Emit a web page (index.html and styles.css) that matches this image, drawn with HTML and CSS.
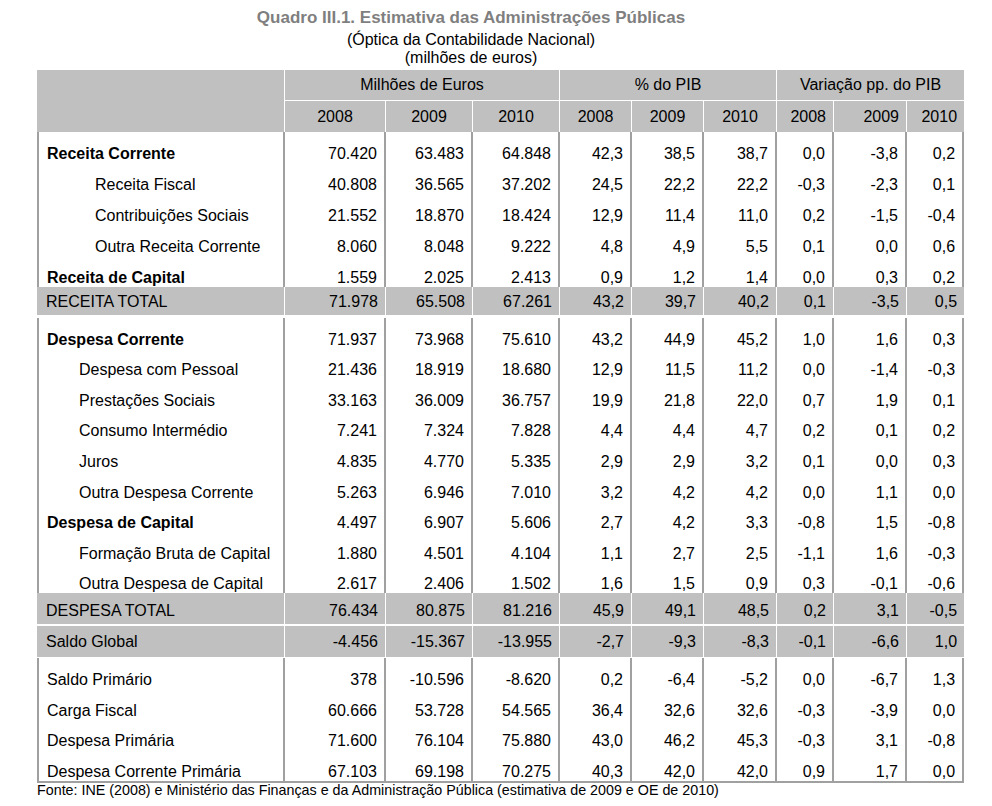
FILE: index.html
```html
<!DOCTYPE html>
<html lang="pt">
<head>
<meta charset="utf-8">
<title>Quadro III.1</title>
<link rel="stylesheet" href="styles.css">
</head>
<body>
<div class="heading">
  <div class="title">Quadro III.1. Estimativa das Administrações Públicas</div>
  <div class="sub first">(Óptica da Contabilidade Nacional)</div>
  <div class="sub">(milhões de euros)</div>
</div>
<table class="quadro">
  <colgroup>
    <col class="c-lbl"><col class="c-me1"><col class="c-me"><col class="c-me"><col class="c-pib"><col class="c-pib"><col class="c-pib3"><col class="c-var"><col class="c-var2"><col class="c-var">
  </colgroup>
  <thead>
    <tr class="hr1">
      <th class="blank" rowspan="2"></th>
      <th class="grp" colspan="3">Milhões de Euros</th>
      <th class="grp" colspan="3">% do PIB</th>
      <th class="grp end" colspan="3">Variação pp. do PIB</th>
    </tr>
    <tr class="hr2">
      <th>2008</th><th>2009</th><th>2010</th>
      <th>2008</th><th>2009</th><th>2010</th>
      <th class="rt">2008</th><th class="rt">2009</th><th class="rt end">2010</th>
    </tr>
  </thead>
  <tbody>
    <tr class="r rc"><td class="lbl b">Receita Corrente</td><td>70.420</td><td>63.483</td><td>64.848</td><td>42,3</td><td>38,5</td><td>38,7</td><td>0,0</td><td>-3,8</td><td>0,2</td></tr>
    <tr class="r rc"><td class="lbl i1">Receita Fiscal</td><td>40.808</td><td>36.565</td><td>37.202</td><td>24,5</td><td>22,2</td><td>22,2</td><td>-0,3</td><td>-2,3</td><td>0,1</td></tr>
    <tr class="r rc"><td class="lbl i1">Contribuições Sociais</td><td>21.552</td><td>18.870</td><td>18.424</td><td>12,9</td><td>11,4</td><td>11,0</td><td>0,2</td><td>-1,5</td><td>-0,4</td></tr>
    <tr class="r rc"><td class="lbl i1">Outra Receita Corrente</td><td>8.060</td><td>8.048</td><td>9.222</td><td>4,8</td><td>4,9</td><td>5,5</td><td>0,1</td><td>0,0</td><td>0,6</td></tr>
    <tr class="r rc"><td class="lbl b">Receita de Capital</td><td>1.559</td><td>2.025</td><td>2.413</td><td>0,9</td><td>1,2</td><td>1,4</td><td>0,0</td><td>0,3</td><td>0,2</td></tr>
    <tr class="tot tot-r"><td class="lbl">RECEITA TOTAL</td><td>71.978</td><td>65.508</td><td>67.261</td><td>43,2</td><td>39,7</td><td>40,2</td><td>0,1</td><td>-3,5</td><td class="end">0,5</td></tr>
    <tr class="r"><td class="lbl b">Despesa Corrente</td><td>71.937</td><td>73.968</td><td>75.610</td><td>43,2</td><td>44,9</td><td>45,2</td><td>1,0</td><td>1,6</td><td>0,3</td></tr>
    <tr class="r"><td class="lbl i2">Despesa com Pessoal</td><td>21.436</td><td>18.919</td><td>18.680</td><td>12,9</td><td>11,5</td><td>11,2</td><td>0,0</td><td>-1,4</td><td>-0,3</td></tr>
    <tr class="r"><td class="lbl i2">Prestações Sociais</td><td>33.163</td><td>36.009</td><td>36.757</td><td>19,9</td><td>21,8</td><td>22,0</td><td>0,7</td><td>1,9</td><td>0,1</td></tr>
    <tr class="r"><td class="lbl i2">Consumo Intermédio</td><td>7.241</td><td>7.324</td><td>7.828</td><td>4,4</td><td>4,4</td><td>4,7</td><td>0,2</td><td>0,1</td><td>0,2</td></tr>
    <tr class="r"><td class="lbl i2">Juros</td><td>4.835</td><td>4.770</td><td>5.335</td><td>2,9</td><td>2,9</td><td>3,2</td><td>0,1</td><td>0,0</td><td>0,3</td></tr>
    <tr class="r"><td class="lbl i2">Outra Despesa Corrente</td><td>5.263</td><td>6.946</td><td>7.010</td><td>3,2</td><td>4,2</td><td>4,2</td><td>0,0</td><td>1,1</td><td>0,0</td></tr>
    <tr class="r"><td class="lbl b">Despesa de Capital</td><td>4.497</td><td>6.907</td><td>5.606</td><td>2,7</td><td>4,2</td><td>3,3</td><td>-0,8</td><td>1,5</td><td>-0,8</td></tr>
    <tr class="r"><td class="lbl i2">Formação Bruta de Capital</td><td>1.880</td><td>4.501</td><td>4.104</td><td>1,1</td><td>2,7</td><td>2,5</td><td>-1,1</td><td>1,6</td><td>-0,3</td></tr>
    <tr class="r"><td class="lbl i2">Outra Despesa de Capital</td><td>2.617</td><td>2.406</td><td>1.502</td><td>1,6</td><td>1,5</td><td>0,9</td><td>0,3</td><td>-0,1</td><td>-0,6</td></tr>
    <tr class="tot tot-d"><td class="lbl">DESPESA TOTAL</td><td>76.434</td><td>80.875</td><td>81.216</td><td>45,9</td><td>49,1</td><td>48,5</td><td>0,2</td><td>3,1</td><td class="end">-0,5</td></tr>
    <tr class="tot tot-s"><td class="lbl">Saldo Global</td><td>-4.456</td><td>-15.367</td><td>-13.955</td><td>-2,7</td><td>-9,3</td><td>-8,3</td><td>-0,1</td><td>-6,6</td><td class="end">1,0</td></tr>
    <tr class="r"><td class="lbl">Saldo Primário</td><td>378</td><td>-10.596</td><td>-8.620</td><td>0,2</td><td>-6,4</td><td>-5,2</td><td>0,0</td><td>-6,7</td><td>1,3</td></tr>
    <tr class="r"><td class="lbl">Carga Fiscal</td><td>60.666</td><td>53.728</td><td>54.565</td><td>36,4</td><td>32,6</td><td>32,6</td><td>-0,3</td><td>-3,9</td><td>0,0</td></tr>
    <tr class="r"><td class="lbl">Despesa Primária</td><td>71.600</td><td>76.104</td><td>75.880</td><td>43,0</td><td>46,2</td><td>45,3</td><td>-0,3</td><td>3,1</td><td>-0,8</td></tr>
    <tr class="r last"><td class="lbl">Despesa Corrente Primária</td><td>67.103</td><td>69.198</td><td>70.275</td><td>40,3</td><td>42,0</td><td>42,0</td><td>0,9</td><td>1,7</td><td>0,0</td></tr>
  </tbody>
</table>
<p class="fonte">Fonte: INE (2008) e Ministério das Finanças e da Administração Pública (estimativa de 2009 e OE de 2010)</p>
</body>
</html>
```

FILE: styles.css
```css
html, body {
  margin: 0;
  padding: 0;
  background: #fff;
}
body {
  padding: 8px;
  font-family: "Liberation Sans", Arial, sans-serif;
  color: #000;
}

.heading {
  width: 926px;
  text-align: center;
}
.title {
  font-size: 17px;
  line-height: 19px;
  font-weight: bold;
  color: #7f7f7f;
}
.sub {
  font-size: 16px;
  line-height: 18px;
}
.sub.first {
  margin-top: 4px;
}

.quadro {
  border-collapse: separate;
  border-spacing: 0;
  table-layout: fixed;
  width: 927px;
  margin: 3px 0 0 29px;
  font-size: 16px;
  line-height: 18px;
  color: #000;
}
.c-lbl { width: 248px; }
.c-me1 { width: 101px; }
.c-me { width: 87px; }
.c-pib { width: 72px; }
.c-pib3 { width: 73px; }
.c-var { width: 57px; }
.c-var2 { width: 73px; }

.quadro th,
.quadro td {
  padding: 0 7px;
  white-space: nowrap;
  overflow: hidden;
}

/* header */
.quadro thead th {
  background: #c0c0c0;
  font-weight: normal;
  text-align: center;
  vertical-align: middle;
  border-right: 1px solid #fff;
}
.quadro thead th.end {
  border-right: none;
}
.quadro thead th.rt {
  text-align: right;
}
.hr1 { height: 31px; }
.hr2 { height: 31px; }
.quadro thead th.grp {
  border-bottom: 1px solid #fff;
}

/* body rows */
.r { height: 30.6px; }
.r.rc { height: 31px; }
.r td {
  vertical-align: bottom;
  text-align: right;
  border-right: 2px solid #a0a0a0;
}
.r td.lbl {
  text-align: left;
  border-left: 2px solid #a0a0a0;
  padding-left: 8px;
}
.r td.b { font-weight: bold; }
.r td.i1 { padding-left: 56px; }
.r td.i2 { padding-left: 40px; }
.r.last { height: 32.6px; }
.r.last td { border-bottom: 2px solid #a0a0a0; }

/* grey total rows */
.tot td {
  background: #c0c0c0;
  vertical-align: middle;
  text-align: right;
  border-right: 1px solid #fff;
}
.tot td.lbl {
  text-align: left;
  padding-left: 9px;
}
.tot td.end { border-right: none; }
.tot-r { height: 31px; }
.tot-r td {
  padding-top: 2px;
  border-bottom: 3px solid #fff;
}
.tot-d { height: 33px; }
.tot-d td {
  padding-top: 4px;
  border-bottom: 2px solid #fff;
}
.tot-s { height: 32px; }
.tot-s td { border-bottom: 1px solid #fff; }

.fonte {
  margin: 0 0 0 29px;
  font-size: 14.3px;
  line-height: 15px;
}
```
